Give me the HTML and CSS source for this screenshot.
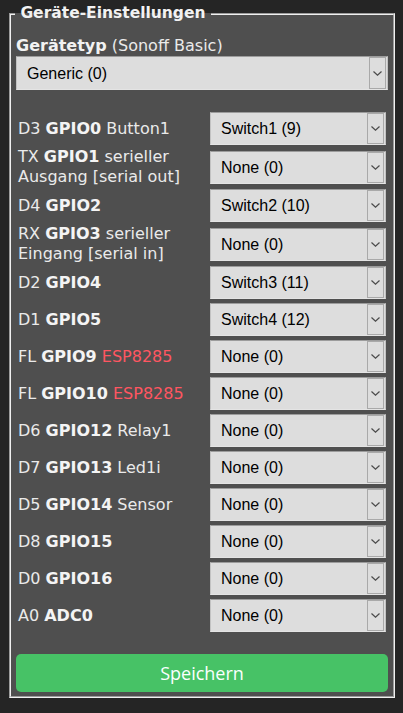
FILE: index.html
```html
<!DOCTYPE html>
<html lang="de">
<head>
<meta charset="utf-8">
<title>Geräte-Einstellungen</title>
<link rel="stylesheet" href="styles.css">
</head>
<body>
<div class="page">
  <form class="config">
    <fieldset class="box">
      <legend class="box-title">&nbsp;Geräte-Einstellungen&nbsp;</legend>
      <div class="devtype"><b>Gerätetyp</b> (Sonoff Basic)</div>
      <div class="sel sel-wide">
        <select><option>Generic (0)</option></select>
        <span class="arrow"><svg width="9" height="5" viewBox="0 0 9 5"><path d="M0.5 0.5 L4.5 4.2 L8.5 0.5" fill="none" stroke="#4a4a4a" stroke-width="1.2"/></svg></span>
      </div>
      <div class="gpio">
        <div class="lbl">D3 <b>GPIO0</b> Button1</div>
        <div class="sel"><select><option>Switch1 (9)</option></select><span class="arrow"><svg width="9" height="5" viewBox="0 0 9 5"><path d="M0.5 0.5 L4.5 4.2 L8.5 0.5" fill="none" stroke="#4a4a4a" stroke-width="1.2"/></svg></span></div>

        <div class="lbl lbl-2">TX <b>GPIO1</b> serieller Ausgang [serial out]</div>
        <div class="sel"><select><option>None (0)</option></select><span class="arrow"><svg width="9" height="5" viewBox="0 0 9 5"><path d="M0.5 0.5 L4.5 4.2 L8.5 0.5" fill="none" stroke="#4a4a4a" stroke-width="1.2"/></svg></span></div>

        <div class="lbl">D4 <b>GPIO2</b></div>
        <div class="sel"><select><option>Switch2 (10)</option></select><span class="arrow"><svg width="9" height="5" viewBox="0 0 9 5"><path d="M0.5 0.5 L4.5 4.2 L8.5 0.5" fill="none" stroke="#4a4a4a" stroke-width="1.2"/></svg></span></div>

        <div class="lbl lbl-2">RX <b>GPIO3</b> serieller Eingang [serial in]</div>
        <div class="sel"><select><option>None (0)</option></select><span class="arrow"><svg width="9" height="5" viewBox="0 0 9 5"><path d="M0.5 0.5 L4.5 4.2 L8.5 0.5" fill="none" stroke="#4a4a4a" stroke-width="1.2"/></svg></span></div>

        <div class="lbl">D2 <b>GPIO4</b></div>
        <div class="sel"><select><option>Switch3 (11)</option></select><span class="arrow"><svg width="9" height="5" viewBox="0 0 9 5"><path d="M0.5 0.5 L4.5 4.2 L8.5 0.5" fill="none" stroke="#4a4a4a" stroke-width="1.2"/></svg></span></div>

        <div class="lbl">D1 <b>GPIO5</b></div>
        <div class="sel"><select><option>Switch4 (12)</option></select><span class="arrow"><svg width="9" height="5" viewBox="0 0 9 5"><path d="M0.5 0.5 L4.5 4.2 L8.5 0.5" fill="none" stroke="#4a4a4a" stroke-width="1.2"/></svg></span></div>

        <div class="lbl">FL <b>GPIO9</b> <span class="warn">ESP8285</span></div>
        <div class="sel"><select><option>None (0)</option></select><span class="arrow"><svg width="9" height="5" viewBox="0 0 9 5"><path d="M0.5 0.5 L4.5 4.2 L8.5 0.5" fill="none" stroke="#4a4a4a" stroke-width="1.2"/></svg></span></div>

        <div class="lbl">FL <b>GPIO10</b> <span class="warn">ESP8285</span></div>
        <div class="sel"><select><option>None (0)</option></select><span class="arrow"><svg width="9" height="5" viewBox="0 0 9 5"><path d="M0.5 0.5 L4.5 4.2 L8.5 0.5" fill="none" stroke="#4a4a4a" stroke-width="1.2"/></svg></span></div>

        <div class="lbl">D6 <b>GPIO12</b> Relay1</div>
        <div class="sel"><select><option>None (0)</option></select><span class="arrow"><svg width="9" height="5" viewBox="0 0 9 5"><path d="M0.5 0.5 L4.5 4.2 L8.5 0.5" fill="none" stroke="#4a4a4a" stroke-width="1.2"/></svg></span></div>

        <div class="lbl">D7 <b>GPIO13</b> Led1i</div>
        <div class="sel"><select><option>None (0)</option></select><span class="arrow"><svg width="9" height="5" viewBox="0 0 9 5"><path d="M0.5 0.5 L4.5 4.2 L8.5 0.5" fill="none" stroke="#4a4a4a" stroke-width="1.2"/></svg></span></div>

        <div class="lbl">D5 <b>GPIO14</b> Sensor</div>
        <div class="sel"><select><option>None (0)</option></select><span class="arrow"><svg width="9" height="5" viewBox="0 0 9 5"><path d="M0.5 0.5 L4.5 4.2 L8.5 0.5" fill="none" stroke="#4a4a4a" stroke-width="1.2"/></svg></span></div>

        <div class="lbl">D8 <b>GPIO15</b></div>
        <div class="sel"><select><option>None (0)</option></select><span class="arrow"><svg width="9" height="5" viewBox="0 0 9 5"><path d="M0.5 0.5 L4.5 4.2 L8.5 0.5" fill="none" stroke="#4a4a4a" stroke-width="1.2"/></svg></span></div>

        <div class="lbl">D0 <b>GPIO16</b></div>
        <div class="sel"><select><option>None (0)</option></select><span class="arrow"><svg width="9" height="5" viewBox="0 0 9 5"><path d="M0.5 0.5 L4.5 4.2 L8.5 0.5" fill="none" stroke="#4a4a4a" stroke-width="1.2"/></svg></span></div>

        <div class="lbl">A0 <b>ADC0</b></div>
        <div class="sel"><select><option>None (0)</option></select><span class="arrow"><svg width="9" height="5" viewBox="0 0 9 5"><path d="M0.5 0.5 L4.5 4.2 L8.5 0.5" fill="none" stroke="#4a4a4a" stroke-width="1.2"/></svg></span></div>
      </div>
      <button type="button" class="save">Speichern</button>
    </fieldset>
  </form>
</div>
</body>
</html>
```
FILE: styles.css
```css
html, body {
  margin: 0;
  padding: 0;
  background: #252525;
}
body {
  color: #eaeaea;
  font-family: "DejaVu Sans", Verdana, sans-serif;
  font-size: 16px;
  line-height: 19px;
}
.page {
  padding: 4px 8px 0 9px;
}
.config {
  margin: 0;
}
.box {
  margin: 0;
  padding: 13px 5px 4px 5px;
  background: #4f4f4f;
  border: 2px groove #f0f0f0;
  min-width: 0;
}
.box-title {
  padding: 0;
  margin-left: -1px;
  font-weight: bold;
  line-height: 19px;
  color: #f2f2f2;
  font-size: 15.5px;
}
.devtype {
  line-height: 19px;
}
.devtype b {
  color: #f2f2f2;
}
.sel {
  position: relative;
  height: 33px;
  margin: 1px 0;
}
.sel-wide {
  height: 34px;
  margin: 1px 0 0 0;
}
.sel select {
  -webkit-appearance: none;
  appearance: none;
  display: block;
  width: 100%;
  height: 100%;
  margin: 0;
  box-sizing: border-box;
  background: #dddddd;
  color: #000;
  font-family: "Liberation Sans", Arial, sans-serif;
  font-size: 16px;
  padding: 0 24px 0 10px;
  border: 1px solid;
  border-color: #9c9c9c #c2c2c2 #e4e4e4 #c2c2c2;
  border-radius: 0;
  outline: none;
}
.arrow {
  position: absolute;
  right: 2px;
  top: 1px;
  bottom: 1px;
  width: 17px;
  box-sizing: border-box;
  border: 1px solid #a9a9a9;
  background: #dddddd;
  display: flex;
  align-items: center;
  justify-content: center;
  pointer-events: none;
}
.arrow svg {
  display: block;
}
.gpio {
  display: grid;
  grid-template-columns: 192px 176px;
  row-gap: 2px;
  margin-top: 19px;
  padding: 2px 0 2px 2px;
  align-items: center;
}
.lbl {
  line-height: 19px;
}
.lbl-2 {
  line-height: 19.6px;
  margin: -0.6px 0;
}
.lbl b {
  color: #f4f4f4;
}
.warn {
  color: #ff5661;
}
.save {
  display: block;
  width: 100%;
  height: 38px;
  margin: 19px 0 0 0;
  padding: 0;
  border: 0;
  border-radius: 5px;
  background: #47c266;
  color: #faffff;
  font-family: "Open Sans", "Noto Sans", sans-serif;
  font-size: 18px;
  line-height: 38px;
  cursor: pointer;
}
```
